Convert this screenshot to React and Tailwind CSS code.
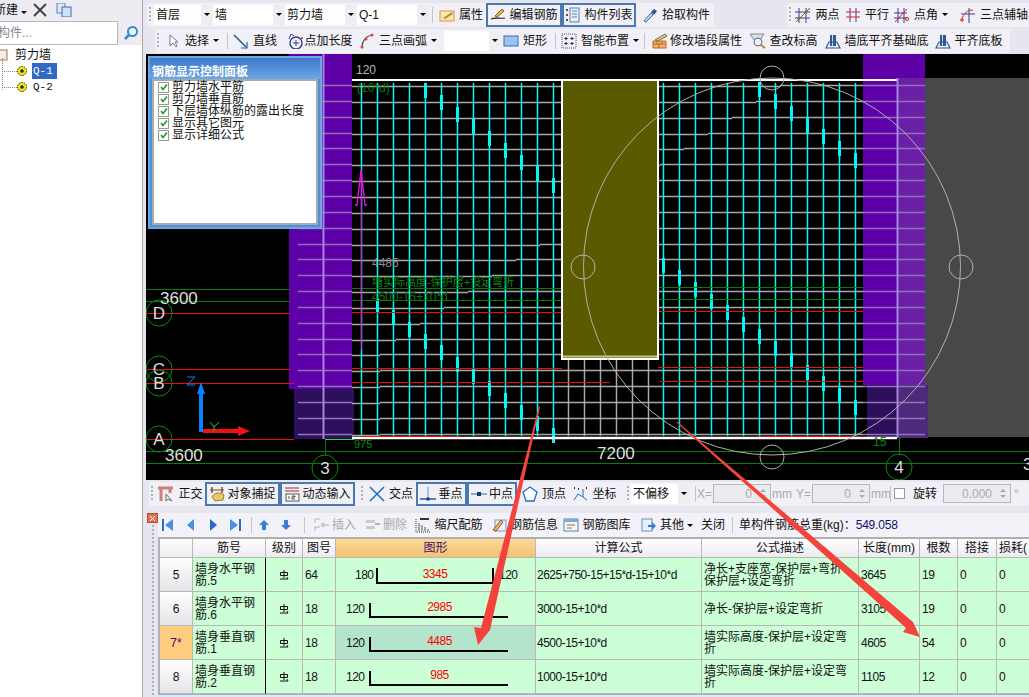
import React from 'react';

const range = (n) => Array.from({ length: n }, (_, i) => i);

// --- small toolbar icons ---
const Ico = ({ children, w = 16, h = 16 }) => (
    <svg width={w} height={h} viewBox={`0 0 ${w} ${h}`} className="shrink-0" fill="none">{children}</svg>
);

const icons = {
    attr: <Ico><rect x="1" y="4" width="14" height="10" fill="#ffe6a8" stroke="#e8903c" /><path d="M4 11 L13 5 L14 7 L6 12 Z" fill="#a89060" /></Ico>,
    pen: <Ico><path d="M1 12 C5 10 10 12 15 11" stroke="#222" strokeWidth="1.2" /><path d="M5 9 L12 2 L14 4 L7 10 Z" fill="#e6c050" stroke="#806020" /></Ico>,
    list: <Ico><rect x="5" y="1" width="9" height="14" fill="#e8f0fa" stroke="#5a82b0" /><path d="M7 4h5M7 7h5M7 10h5" stroke="#5a82b0" /><path d="M1 3h2M1 8h2M1 13h2" stroke="#555" strokeWidth="2" /></Ico>,
    dropper: <Ico><path d="M2 14 L9 6 L11 8 L4 15 Z" fill="#bcd8f4" stroke="#3a6ea8" /><path d="M9 5 L12 2 L15 4 L12 8 Z" fill="#2a5a98" /></Ico>,
    twoPt: <Ico><path d="M4 1v15M11 1v15M0 5h15M0 11h15" stroke="#34408c" /><path d="M1 15 L15 1" stroke="#e02020" /><circle cx="4" cy="11" r="1.6" fill="#3a9a30" /><circle cx="11" cy="5" r="1.6" fill="#3a9a30" /></Ico>,
    parallel: <Ico><path d="M5 1v14M11 1v14" stroke="#34408c" /><path d="M1 5h14M1 10h14" stroke="#e02020" /></Ico>,
    angle: <Ico><path d="M4 1v15M10 1v15M0 6h13M0 11h13" stroke="#34408c" /><path d="M1 15 L13 2" stroke="#e02020" /><circle cx="13" cy="12" r="1.6" stroke="#e02020" /></Ico>,
    arcAxis: <Ico><path d="M9 1v15M1 7h14" stroke="#34408c" /><path d="M2 13 C3 6 8 3 13 3" stroke="#e02020" /><circle cx="2" cy="13" r="1.3" stroke="#e02020" /></Ico>,
    cursor: <Ico><path d="M5 2 L5 13 L8 10 L11 14 L12 13 L10 9 L13 9 Z" fill="#fff" stroke="#6a7a98" /></Ico>,
    line: <Ico><path d="M1 2 L13 14" stroke="#2a5a98" strokeWidth="1.6" /><path d="M14 9v6H8" stroke="#2a5a98" strokeWidth="1.2" /></Ico>,
    addLen: <Ico><circle cx="9" cy="10" r="6" stroke="#34408c" strokeWidth="1.4" /><path d="M9 7v6M6 10h6" stroke="#34408c" /><path d="M2 6 L4 1 L7 3" stroke="#34408c" /><circle cx="15" cy="5" r="1" fill="#e02020" /></Ico>,
    arc: <Ico><path d="M3 14 C3 8 7 3 13 2" stroke="#34408c" strokeWidth="1.2" /><circle cx="3" cy="14" r="1.6" fill="#e05020" /><circle cx="7" cy="6" r="1.6" fill="#e05020" /><circle cx="13" cy="2" r="1.6" fill="#e05020" /></Ico>,
    rect: <Ico><rect x="1" y="3" width="14" height="10" fill="#9cc4f0" stroke="#3a6ea8" /></Ico>,
    smart: <Ico><rect x="1" y="1" width="14" height="14" fill="#eef" stroke="#555" strokeDasharray="1 1" /><path d="M5 4v3M3.5 5.5h3M11 4v3M9.500 5.500h3M5 9v3M3.500 10.500h3M11 9v3M9.500 10.500h3" stroke="#222" /></Ico>,
    brick: <Ico><path d="M1 8 L14 8 L14 15 L1 15 Z" fill="#f0b070" stroke="#c06820" /><path d="M1 11h13M5 8v3M10 8v3M7 11v4" stroke="#c06820" /><path d="M3 7 L13 1 L15 3 L6 8 Z" fill="#d8c890" stroke="#807040" /></Ico>,
    elev: <Ico><path d="M0 1h14L10 7H4Z" fill="#d8e0ec" stroke="#888" /><circle cx="8" cy="9" r="4" fill="#eef" stroke="#667" /><path d="M11 12 L15 15" stroke="#c08030" strokeWidth="2" /></Ico>,
    align: <Ico><rect x="5" y="2" width="6" height="11" fill="#2a5a98" /><path d="M7.500 2v11" stroke="#cde" /><path d="M1 15 L4 9 H12 L15 15 Z" stroke="#2a5a98" strokeWidth="1.2" /></Ico>,
    ortho: <Ico><path d="M0 2h15M3 2v13M12 2v5" stroke="#d08078" strokeWidth="3" /><path d="M8 8 L8 15 L10 13 L14 15 Z" fill="#fff" stroke="#667" /></Ico>,
    snap: <Ico><path d="M3 1v6M13 1v6" stroke="#a03020" strokeWidth="1.400" /><path d="M1 4h14" stroke="#555" /><path d="M3 11 C5 6 12 6 15 9 L14 14 L6 15 Z" fill="#e6c868" stroke="#a08030" /></Ico>,
    dyn: <Ico><path d="M1 2h14M1 5h14" stroke="#a03020" /><rect x="2" y="8" width="13" height="7" fill="#fff" stroke="#555" /><path d="M5 10v3M8 10h3v1H8v2h3" stroke="#222" strokeWidth=".8" /></Ico>,
    cross: <Ico><path d="M1 1 L15 15M15 1 L1 15" stroke="#1f6fc8" strokeWidth="1.500" /></Ico>,
    perp: <Ico><path d="M8 1v12" stroke="#7090c0" /><path d="M0 13h16" stroke="#2a5a98" strokeWidth="1.500" /><rect x="6.500" y="11.500" width="3" height="3" fill="#143a80" /></Ico>,
    mid: <Ico><path d="M0 8h16" stroke="#7090c0" strokeWidth="1.500" /><rect x="6" y="6" width="4" height="4" fill="#143a80" /></Ico>,
    vertex: <Ico><path d="M8 1 L15 6 L12 15 H4 L1 6 Z" fill="#fff" stroke="#1f6fc8" strokeWidth="1.300" /></Ico>,
    coord: <Ico><path d="M2 14 L6 8 L11 11 M11 11 V3 M11 11 L15 14" stroke="#1f6fc8" /><path d="M2 2h1M6 3h1M14 2h1" stroke="#333" strokeWidth="2" /></Ico>,
    first: <Ico><path d="M3 2v12" stroke="#2a6ac8" strokeWidth="2" /><path d="M13 2 L5 8 L13 14 Z" fill="#4a90e0" /></Ico>,
    prev: <Ico><path d="M11 2 L4 8 L11 14 Z" fill="#4a90e0" /></Ico>,
    next: <Ico><path d="M5 2 L12 8 L5 14 Z" fill="#2a6ac8" /></Ico>,
    last: <Ico><path d="M13 2v12" stroke="#2a6ac8" strokeWidth="2" /><path d="M3 2 L11 8 L3 14 Z" fill="#4a90e0" /></Ico>,
    up: <Ico><path d="M8 3 L13 8 H10 V13 H6 V8 H3 Z" fill="#3a80d8" /></Ico>,
    down: <Ico><path d="M8 13 L13 8 H10 V3 H6 V8 H3 Z" fill="#3a80d8" /></Ico>,
    insert: <Ico><path d="M1 2h5M1 2v4M1 10h5M1 10v4M9 8h6" stroke="#b4b4b4" /><rect x="7" y="6" width="4" height="4" fill="#ccc" /></Ico>,
    remove: <Ico><rect x="1" y="3" width="9" height="3" fill="#ccc" /><rect x="1" y="9" width="9" height="3" fill="#ccc" /><path d="M10 7h5" stroke="#b4b4b4" strokeWidth="2" /></Ico>,
    scale: <Ico><path d="M1 2v13h14" stroke="#333" strokeDasharray="1 1" /><path d="M4 6v8M7 8v6M10 10v4M13 12v2" stroke="#555" /><path d="M5 2h9" stroke="#333" strokeWidth="2" /></Ico>,
    info: <Ico><rect x="3" y="3" width="11" height="11" fill="#eef" stroke="#7a94b8" /><path d="M1 13 L9 3 L11 5 L4 14 Z" fill="#e8c050" stroke="#806020" /></Ico>,
    lib: <Ico><rect x="1" y="2" width="14" height="12" fill="#f4f8fc" stroke="#5a82b0" /><rect x="1" y="2" width="14" height="3" fill="#80a8d8" /><path d="M4 8h8M4 11h5" stroke="#b06030" /></Ico>,
    other: <Ico><rect x="1" y="2" width="10" height="12" fill="#e8f0fa" stroke="#6a8cb8" /><path d="M7 8h4V5l4 4-4 4v-3H7Z" fill="#2f7ed8" /></Ico>,
};

const Caret = ({ muted }) => (
    <span className={`inline-block w-0 h-0 border-x-[3px] border-x-transparent border-t-[3px] ${muted ? 'border-t-[#555]' : 'border-t-black'}`} />
);

const Grip = () => (
    <span className="shrink-0 w-[2px] h-[16px] mx-[2px] bg-[repeating-linear-gradient(to_bottom,#b0b0b8_0_2px,transparent_2px_4px)]" />
);

const Sep = ({ className = '' }) => <span className={`shrink-0 w-px h-[16px] bg-[#c4c4cc] ${className}`} />;

function Tool({ icon, label, w, pressed, caret, muted, gap = 'gap-[4px]' }) {
    return (
        <div style={{ width: w }} className={`shrink-0 h-[24px] flex items-center justify-center ${gap} whitespace-nowrap ${pressed ? 'border-2 border-[#4a78b0] bg-[#f0f0f6]' : ''} ${muted ? 'text-[#aaa]' : 'text-[#111]'}`}>
            {icon}
            <span>{label}</span>
            {caret && <Caret />}
        </div>
    );
}

function Combo({ text, w }) {
    return (
        <div style={{ width: w }} className="shrink-0 h-[20px] bg-white flex items-center pl-[2px] text-[#111]">
            <span className="flex-1 whitespace-nowrap">{text}</span>
            <span className="w-[11px] h-full bg-[#eeeef2] flex items-center justify-center"><Caret /></span>
        </div>
    );
}

function Spin({ value, w }) {
    return (
        <div style={{ width: w }} className="shrink-0 h-[19px] border border-[#b8b8b8] bg-[#ececf0] flex items-center justify-end text-[#aaa]">
            <span>{value}</span>
            <span className="w-[14px] flex flex-col items-center gap-[3px] ml-[4px]">
                <span className="w-0 h-0 border-x-[3px] border-x-transparent border-b-[3px] border-b-[#aaa]" />
                <span className="w-0 h-0 border-x-[3px] border-x-transparent border-t-[3px] border-t-[#aaa]" />
            </span>
        </div>
    );
}

// --- left tree ---
function Sidebar() {
    return (
        <div className="w-[143px] shrink-0 h-full flex flex-col bg-white border-r border-[#a8a8a8]">
            <div className="h-[20px] bg-[#ececf2] flex items-center overflow-hidden text-[#111]">
                <span className="-ml-[6px]">新建</span>
                <span className="ml-[3px]"><Caret /></span>
                <svg width="14" height="14" viewBox="0 0 14 14" className="ml-[6px]"><path d="M1 1 L13 13M13 1 L1 13" stroke="#444" strokeWidth="2" /></svg>
                <svg width="16" height="14" viewBox="0 0 16 14" className="ml-[9px]"><rect x="1" y="0" width="8" height="10" fill="#dfe9f8" stroke="#5a82b0" /><rect x="6" y="4" width="9" height="10" fill="#cfe0f8" stroke="#3a6ea8" /></svg>
            </div>
            <div className="h-[25px] bg-[#ececf2] flex items-center gap-[5px]">
                <div className="w-[118px] h-[24px] bg-white border border-[#b8b8b8] border-l-0 flex items-center text-[#888] overflow-hidden">
                    <span className="-ml-[2px]">构件...</span>
                </div>
                <svg width="16" height="16" viewBox="0 0 16 16"><circle cx="9.500" cy="6.500" r="4.500" fill="#f4faff" stroke="#2f8ad0" strokeWidth="2" /><path d="M6 10 L2 14" stroke="#2f8ad0" strokeWidth="2.500" /></svg>
            </div>
            <div className="flex-1 pt-[2px] relative text-[#111]">
                <div className="h-[16px] flex items-center">
                    <svg width="10" height="14" viewBox="0 0 10 14" className="-ml-[1px]"><rect x="0" y="2" width="8" height="10" fill="#eee" stroke="#c07030" /></svg>
                    <span className="ml-[6px]">剪力墙</span>
                </div>
                {['Q-1', 'Q-2'].map((q, i) => (
                    <div key={q} className="h-[16px] flex items-center">
                        <span className="w-[15px] ml-[2px] border-t border-dotted border-[#888]" />
                        <svg width="10" height="10" viewBox="0 0 10 10"><circle cx="5" cy="5" r="4.500" fill="#f6e800" stroke="#222" strokeDasharray="1.500 1" /><circle cx="5" cy="5" r="1.800" fill="#222" /></svg>
                        <span className={`ml-[5px] w-[25px] h-[16px] pl-[1px] leading-[16px] [font-family:'Liberation_Mono',monospace] text-[11px] ${i === 0 ? 'bg-[#316ac5] text-white' : ''}`}>{q}</span>
                    </div>
                ))}
                <span className="absolute left-[2px] top-[13px] h-[32px] border-l border-dotted border-[#888]" />
            </div>
        </div>
    );
}

// --- top toolbars ---
function TopBars() {
    return (
        <div className="h-[54px] shrink-0 bg-[#e6e6ee] flex flex-col">
            <div className="h-[27px] flex items-center pt-[2px]">
                <div className="w-[567px] ml-[1px] h-[24px] bg-[#f0f0f6] rounded-[3px] flex items-center">
                    <Grip />
                    <span className="w-[1px]" />
                    <div className="flex gap-[1px]">
                        <Combo text="首层" w={58} />
                        <Combo text="墙" w={71} />
                        <Combo text="剪力墙" w={71} />
                        <Combo text="Q-1" w={71} />
                    </div>
                    <Sep className="ml-[4px] mr-[5px]" />
                    <Tool icon={icons.attr} label="属性" w={46} />
                    <span className="w-[2px]" />
                    <Tool icon={icons.pen} label="编辑钢筋" w={76} pressed gap="gap-[3px]" />
                    <Tool icon={icons.list} label="构件列表" w={74} pressed gap="gap-[3px]" />
                    <span className="w-[4px]" />
                    <Tool icon={icons.dropper} label="拾取构件" w={72} />
                </div>
                <div className="ml-[73px] flex-1 h-[24px] bg-[#f0f0f6] rounded-l-[3px] flex items-center overflow-hidden">
                    <Grip />
                    <Tool icon={icons.twoPt} label="两点" w={49} />
                    <Tool icon={icons.parallel} label="平行" w={50} />
                    <Tool icon={icons.angle} label="点角" w={58} caret />
                    <Tool icon={icons.arcAxis} label="三点辅轴" w={88} />
                </div>
            </div>
            <div className="h-[27px] flex items-center">
                <div className="w-[855px] ml-[9px] h-[24px] bg-[#f0f0f6] rounded-[3px] flex items-center">
                    <Grip />
                    <span className="w-[1px]" />
                    <Tool icon={icons.cursor} label="选择" w={60} caret />
                    <Sep className="ml-[5px] mr-[2px]" />
                    <Tool icon={icons.line} label="直线" w={50} />
                    <span className="w-[3px]" />
                    <Tool icon={icons.addLen} label="点加长度" w={74} gap="gap-[1px]" />
                    <Tool icon={icons.arc} label="三点画弧" w={82} caret />
                    <span className="w-[5px]" />
                    <Combo text="" w={56} />
                    <span className="w-[2px]" />
                    <Tool icon={icons.rect} label="矩形" w={46} />
                    <Sep className="ml-[7px] mr-[4px]" />
                    <Tool icon={icons.smart} label="智能布置" w={80} caret />
                    <Sep className="mx-[4px]" />
                    <Tool icon={icons.brick} label="修改墙段属性" w={96} gap="gap-[2px]" />
                    <span className="w-[3px]" />
                    <Tool icon={icons.elev} label="查改标高" w={72} gap="gap-[3px]" />
                    <span className="w-[3px]" />
                    <Tool icon={icons.align} label="墙底平齐基础底" w={108} gap="gap-[3px]" />
                    <span className="w-[3px]" />
                    <Tool icon={icons.align} label="平齐底板" w={70} gap="gap-[3px]" />
                </div>
            </div>
        </div>
    );
}

// --- CAD view: a free drawing, coordinates are page pixels via the viewBox ---
const hLines = range(23).map((k) => Math.round(85 + 15.85 * k) + 0.5);
const cyanA = range(13).map((k) => 361 + 16 * k);
const cyanB = range(13).map((k) => 663 + 16 * k);
const dash = (x, base, x0) => ({ x, y: Math.round(base + (x - x0) * 0.74) });
const dashes = [
    ...cyanA.filter((x) => x >= 423).map((x) => dash(x, 82, 423)),
    ...cyanA.filter((x) => x >= 377).map((x) => dash(x, 298, 377)),
    ...cyanB.map((x) => dash(x, 258, 663)),
    ...cyanB.filter((x) => x >= 759).map((x) => dash(x, 82, 759)),
];
const Bubble = ({ cx, cy, t, r = 13, size = 17 }) => (
    <g>
        <circle cx={cx} cy={cy} r={r} stroke="#0a8a0a" fill="none" />
        <text x={cx} y={cy + 6} textAnchor="middle" fontSize={size} fill="#ddd" fontFamily="Liberation Sans">{t}</text>
    </g>
);

function CadView() {
    return (
        <svg width="883" height="426" viewBox="146 54 883 426" className="block shrink-0 bg-black">
            {/* side blocks */}
            <rect x="925" y="78" width="104" height="359" fill="#484848" />
            <rect x="289" y="54" width="63" height="335" fill="#5e00a8" />
            <rect x="294" y="389" width="60" height="50" fill="#2e0f5c" />
            <rect x="863" y="54" width="62" height="331" fill="#5e00a8" />
            <rect x="897" y="78" width="28" height="307" fill="#6a1fa6" />
            <rect x="867" y="385" width="30" height="53" fill="#2e0f5c" />
            <rect x="897" y="385" width="31" height="53" fill="#4d2a7a" />

            {/* bar grid */}
            <g>
                {hLines.map((y, k) => {
                    const br = Math.max(780 - 24 * k, 380);
                    return (
                        <g key={y} strokeWidth="1.500">
                            <path d={`M352 ${y + 1} H${br} M${br} ${y} H863`} stroke="#b0a69e" />
                            <path d={`M298 ${y} H352 M863 ${y} H925`} stroke="#8e74b8" />
                        </g>
                    );
                })}
                {range(6).map((k) => <path key={k} d={`M${568.5 + 16 * k} 358V436`} stroke="#b0a69e" strokeWidth="1.500" />)}
                {[...cyanA, ...cyanB].map((x) => <path key={x} d={`M${x + 0.5} 83 V436`} stroke="#00f8f8" strokeWidth="1.500" />)}
                {dashes.map((d, i) => <rect key={i} x={d.x - 1} y={d.y} width="3" height="15" fill="#00f8f8" />)}
            </g>

            {/* axis lines through the wall */}
            <g shapeRendering="crispEdges">
                <path d="M146 289.500H290M352 288.500H562M658 287.500H863" stroke="#0a7a0a" />
                <path d="M146 301.500H290M352 300.500H562M658 299.500H863" stroke="#0a7a0a" />
                <path d="M146 313.500H290M352 312.500H562M658 311.500H863" stroke="#e81010" />
                <path d="M146 369.500H290M352 368.500H562M658 367.500H863" stroke="#e81010" />
                <path d="M146 383.500H294M352 382.500H610M660 381.500H863" stroke="#e81010" />
                <path d="M146 439.500H294" stroke="#e81010" />
                <path d="M146 451.500H1029M146 463.500H1029" stroke="#0a7a0a" />
                <path d="M325.500 439V456M899.500 438V455" stroke="#0a7a0a" />
                <path d="M325 439.500H354" stroke="#20e020" />
            </g>

            {/* wall opening and wall edges */}
            <rect x="562" y="80" width="96" height="279" fill="#5a5a00" stroke="#fff" strokeWidth="2" />
            <path d="M563 356.500H657" stroke="#c8c890" strokeWidth="2" />
            <path d="M352 80H562M658 80H897" stroke="#fff" strokeWidth="2" />
            <path d="M352 438H897" stroke="#fff" strokeWidth="2.500" />
            <path d="M360 436.500H460M758 436.500H860" stroke="#e81010" />
            <path d="M323.500 54V439M897.500 78V438" stroke="#a884e0" strokeWidth="2" />

            {/* guide circles */}
            <g stroke="#b0b0b0" fill="none">
                <circle cx="772" cy="266.500" r="188.500" />
                <circle cx="772" cy="78" r="12" />
                <circle cx="772" cy="457" r="12" />
                <circle cx="583" cy="267" r="12" />
                <circle cx="961" cy="267" r="12" />
            </g>

            {/* magenta mark */}
            <path d="M361.500 170V350" stroke="#f010f0" />
            <path d="M361 170 L357 205H355M361 170 L365 205H367" stroke="#f010f0" strokeWidth="1.300" fill="none" />

            {/* labels */}
            <g fontFamily="Liberation Sans, Noto Sans CJK SC, sans-serif">
                <text x="356" y="74" fontSize="12" fill="#b8b8b8">120</text>
                <text x="357" y="92" fontSize="12" fill="#0a7a0a">(10*d)</text>
                <text x="372" y="267" fontSize="12" fill="#8a8a8a">4485</text>
                <text x="372" y="286" fontSize="11" fill="#0a8a0a">墙实际高度-保护层+设定弯折</text>
                <text x="372" y="301" fontSize="12" fill="#0a7a0a">4500-15+10*d</text>
                <text x="354" y="448" fontSize="11" fill="#0a8a0a">975</text>
                <text x="873" y="446" fontSize="12" fill="#0a8a0a">15</text>
                <text x="160" y="304" fontSize="17" fill="#ddd">3600</text>
                <text x="165" y="461" fontSize="17" fill="#ddd">3600</text>
                <text x="597" y="459" fontSize="17" fill="#ddd">7200</text>
                <text x="1023" y="470" fontSize="17" fill="#ddd">3</text>
            </g>
            <Bubble cx={159} cy={313} t="D" />
            <Bubble cx={159} cy={369} t="C" />
            <Bubble cx={159} cy={383} t="B" />
            <Bubble cx={159} cy={439} t="A" />
            <Bubble cx={325} cy={468} t="3" />
            <Bubble cx={899} cy={467} t="4" />

            {/* coordinate gizmo */}
            <path d="M201 432V392" stroke="#0a80ff" strokeWidth="4" />
            <path d="M201 382 L205 394H197Z" fill="#0a80ff" />
            <path d="M187 377h8l-8 8h8" stroke="#0a80ff" fill="none" />
            <path d="M203 431H240" stroke="#f01010" strokeWidth="4" />
            <path d="M250 431 L238 426V436Z" fill="#f01010" />
            <path d="M210 422 L214 427 L219 422M214 427V431" stroke="#20d020" fill="none" />
        </svg>
    );
}

function RebarPanel() {
    const rows = ['剪力墙水平筋', '剪力墙垂直筋', '下层墙体纵筋的露出长度', '显示其它图元', '显示详细公式'];
    return (
        <div className="absolute left-[148px] top-[56px] w-[174px] h-[173px] border-2 border-[#6aa6e0] bg-[#4e90d8] flex flex-col">
            <div className="h-[21px] shrink-0 pl-[2px] flex items-end pb-[1px] bg-linear-to-b from-[#3c78c8] to-[#6aa8e6] text-white font-bold whitespace-nowrap">钢筋显示控制面板</div>
            <div className="flex-1 mx-[2px] mb-[2px] bg-white border-2 border-[#aaa] pl-[4px] text-[#111]">
                {rows.map((r) => (
                    <div key={r} className="h-[12px] flex items-center gap-[3px] whitespace-nowrap leading-none">
                        <span className="w-[11px] h-[11px] shrink-0 border border-[#999] bg-white flex items-center justify-center">
                            <svg width="8" height="8" viewBox="0 0 8 8"><path d="M1 4 L3 6.500 L7 1.500" stroke="#1a9a2a" strokeWidth="1.600" fill="none" /></svg>
                        </span>
                        <span>{r}</span>
                    </div>
                ))}
            </div>
        </div>
    );
}

function SnapBar() {
    return (
        <div className="h-[27px] shrink-0 bg-[#e6e6ee] flex items-center overflow-hidden">
            <div className="flex-1 ml-[3px] h-[24px] bg-[#f0f0f6] rounded-[3px] flex items-center">
                <Grip />
                <span className="w-[1px]" />
                <Tool icon={icons.ortho} label="正交" w={49} />
                <Tool icon={icons.snap} label="对象捕捉" w={75} pressed gap="gap-[2px]" />
                <Tool icon={icons.dyn} label="动态输入" w={75} pressed gap="gap-[2px]" />
                <span className="w-[4px]" />
                <Grip />
                <span className="w-[1px]" />
                <Tool icon={icons.cross} label="交点" w={50} />
                <Tool icon={icons.perp} label="垂点" w={51} pressed gap="gap-[2px]" />
                <Tool icon={icons.mid} label="中点" w={50} pressed gap="gap-[2px]" />
                <span className="w-[4px]" />
                <Tool icon={icons.vertex} label="顶点" w={46} />
                <span className="w-[4px]" />
                <Tool icon={icons.coord} label="坐标" w={47} />
                <span className="w-[7px]" />
                <Grip />
                <Combo text="不偏移" w={58} />
                <Sep className="ml-[6px] mr-[1px]" />
                <span className="text-[#aaa]">X=</span>
                <span className="w-[1px]" />
                <Spin value="0" w={58} />
                <span className="text-[#aaa] ml-[1px] w-[24px]">mm</span>
                <span className="text-[#aaa]">Y=</span>
                <span className="w-[1px]" />
                <Spin value="0" w={58} />
                <span className="text-[#aaa] ml-[1px] w-[19px]">mm</span>
                <Sep className="mr-[3px]" />
                <span className="w-[11px] h-[11px] border border-[#999] bg-white shrink-0" />
                <span className="ml-[8px] text-[#111] whitespace-nowrap">旋转</span>
                <span className="w-[6px]" />
                <Spin value="0.000" w={68} />
                <span className="ml-[3px] text-[#aaa]">°</span>
            </div>
        </div>
    );
}

// --- rebar table ---
const colW = [33, 73, 37, 33, 200, 166, 157, 61, 38, 39, 33];
const heads = ['', '筋号', '级别', '图号', '图形', '计算公式', '公式描述', '长度(mm)', '根数', '搭接', '损耗('];
const data = [
    { no: '5', name: '墙身水平钢筋.5', fig: '64', left: '180', len: '3345', right: '120', f: '2625+750-15+15*d-15+10*d', d: '净长+支座宽-保护层+弯折-保护层+设定弯折', l: '3645', n: '19' },
    { no: '6', name: '墙身水平钢筋.6', fig: '18', left: '120', len: '2985', f: '3000-15+10*d', d: '净长-保护层+设定弯折', l: '3105', n: '19' },
    { no: '7*', name: '墙身垂直钢筋.1', fig: '18', left: '120', len: '4485', f: '4500-15+10*d', d: '墙实际高度-保护层+设定弯折', l: '4605', n: '54', sel: true },
    { no: '8', name: '墙身垂直钢筋.2', fig: '18', left: '120', len: '985', f: '1000-15+10*d', d: '墙实际高度-保护层+设定弯折', l: '1105', n: '12' },
];

function Shape({ row }) {
    if (row.right) {
        return (
            <div className="w-full h-full flex items-center text-[#111]">
                <span className="ml-[19px] w-[21px]">{row.left}</span>
                <div className="w-[118px] h-[16px] mt-[3px] border-x-2 border-b-2 border-black text-[#f00] text-center leading-[12px]">{row.len}</div>
                <span className="ml-[5px]">{row.right}</span>
            </div>
        );
    }
    return (
        <div className="w-full h-full flex items-center text-[#111]">
            <span className="ml-[10px] w-[23px]">{row.left}</span>
            <div className="w-[139px] h-[15px] mt-[3px] border-l-2 border-b-2 border-black text-[#f00] text-center leading-[8px]">{row.len}</div>
        </div>
    );
}

function RebarTable() {
    const num = "tracking-[-0.5px]";
    const cell = 'border-r border-b border-[#b8b8b8] h-full overflow-hidden';
    return (
        <div className="border-t-2 border-l-2 border-[#b0b0b0] bg-[#ccffd6] w-[871px]">
            <div className="grid h-[19px] text-[#111]" style={{ gridTemplateColumns: colW.join('px ') + 'px' }}>
                {heads.map((h, i) => (
                    <div key={i} className={`${cell} flex items-center justify-center whitespace-nowrap ${i === 4 ? 'bg-linear-to-b from-[#fbd99a] to-[#f1c272] text-[#4a0a6a]' : 'bg-linear-to-b from-white to-[#ececf0]'}`}>{h}</div>
                ))}
            </div>
            {data.map((r) => (
                <div key={r.no} className="grid h-[34px] text-[#111]" style={{ gridTemplateColumns: colW.join('px ') + 'px' }}>
                    <div className={`${cell} flex items-center justify-center ${r.sel ? 'bg-[#ffcc80] text-[#4a0a6a]' : 'bg-linear-to-b from-white to-[#e4e4e8]'}`}>{r.no}</div>
                    <div className={`${cell} border-r-black px-[2px] flex items-center leading-[12px]`}>{r.name}</div>
                    <div className={`${cell} flex items-center justify-center`}>
                        <svg width="10" height="10" viewBox="0 0 10 10"><path d="M5 0v8M1.500 2.500h7v3h-7zM1 9h8M8 7l1 2" stroke="#111" fill="none" /></svg>
                    </div>
                    <div className={`${cell} flex items-center pl-[2px] ${num}`}>{r.fig}</div>
                    <div className={`${cell} ${r.sel ? 'bg-[#b4e4cc]' : ''} ${num}`}><Shape row={r} /></div>
                    <div className={`${cell} flex items-center pl-[1px] whitespace-nowrap ${num}`}>{r.f}</div>
                    <div className={`${cell} flex items-center px-[2px] leading-[12px]`}>{r.d}</div>
                    <div className={`${cell} flex items-center pl-[2px] ${num}`}>{r.l}</div>
                    <div className={`${cell} flex items-center pl-[2px] ${num}`}>{r.n}</div>
                    <div className={`${cell} flex items-center pl-[2px] ${num}`}>0</div>
                    <div className={`${cell} flex items-center pl-[2px] ${num}`}>0</div>
                </div>
            ))}
        </div>
    );
}

function BottomPanel() {
    return (
        <div className="flex-1 bg-[#e6e6ee] flex min-h-0 overflow-hidden">
            <div className="w-[12px] shrink-0 pl-px pt-[6px] flex flex-col items-center">
                <span className="w-[11px] h-[10px] bg-[#e07048] border border-[#b05030] flex items-center justify-center">
                    <svg width="7" height="7" viewBox="0 0 7 7"><path d="M1 1 L6 6M6 1 L1 6" stroke="#fff" /></svg>
                </span>
                <span className="mt-[2px] w-[2px] flex-1 bg-[repeating-linear-gradient(to_bottom,#b0b0b8_0_2px,transparent_2px_4px)]" />
            </div>
            <div className="flex-1 min-w-0 flex flex-col">
                <div className="h-[24px] mt-[6px] shrink-0 bg-[#f2f2f8] flex items-center pl-[1px] whitespace-nowrap text-[#111]">
                    <Tool icon={icons.first} w={22} />
                    <span className="w-[1px]" />
                    <Tool icon={icons.prev} w={22} />
                    <Tool icon={icons.next} w={22} />
                    <Tool icon={icons.last} w={22} />
                    <Sep className="mx-[3px]" />
                    <Tool icon={icons.up} w={22} />
                    <Tool icon={icons.down} w={22} />
                    <Sep className="ml-[5px] mr-[7px]" />
                    <Tool icon={icons.insert} label="插入" w={46} muted gap="gap-[2px]" />
                    <span className="w-[5px]" />
                    <Tool icon={icons.remove} label="删除" w={46} muted gap="gap-[2px]" />
                    <span className="w-[5px]" />
                    <Tool icon={icons.scale} label="缩尺配筋" w={70} gap="gap-[3px]" />
                    <span className="w-[6px]" />
                    <Tool icon={icons.info} label="钢筋信息" w={70} gap="gap-[2px]" />
                    <span className="w-[2px]" />
                    <Tool icon={icons.lib} label="钢筋图库" w={70} gap="gap-[3px]" />
                    <span className="w-[9px]" />
                    <Tool icon={icons.other} label="其他" w={52} caret gap="gap-[3px]" />
                    <span className="w-[8px]" />
                    <span className="w-[26px]">关闭</span>
                    <Sep className="ml-[5px] mr-[6px]" />
                    <span>单构件钢筋总重(kg)：</span>
                    <span className="text-[#10106a] tracking-[-0.2px]">549.058</span>
                </div>
                <RebarTable />
                <div className="flex-1 bg-[#dfe8f6] border-t border-[#9ab0d0]" />
            </div>
        </div>
    );
}

export default function App() {
    return (
        <div className="relative w-[1029px] h-[697px] overflow-hidden flex bg-[#e6e6ee] text-[12px] leading-none [font-family:'Liberation_Sans','Noto_Sans_CJK_SC',sans-serif]">
            <Sidebar />
            <div className="ml-[3px] flex-1 min-w-0 flex flex-col">
                <TopBars />
                <CadView />
                <SnapBar />
                <BottomPanel />
            </div>
            <RebarPanel />
            {/* red annotation arrows lying over the whole window */}
            <svg width="1029" height="697" viewBox="0 0 1029 697" className="absolute inset-0 pointer-events-none">
                <polygon points="539,406 540,407 490,630 478,645 474,627 481,628" fill="#f4433c" />
                <polygon points="676,422 677,421.500 913,622 920,637 903,632 906,628" fill="#f4433c" />
            </svg>
        </div>
    );
}
